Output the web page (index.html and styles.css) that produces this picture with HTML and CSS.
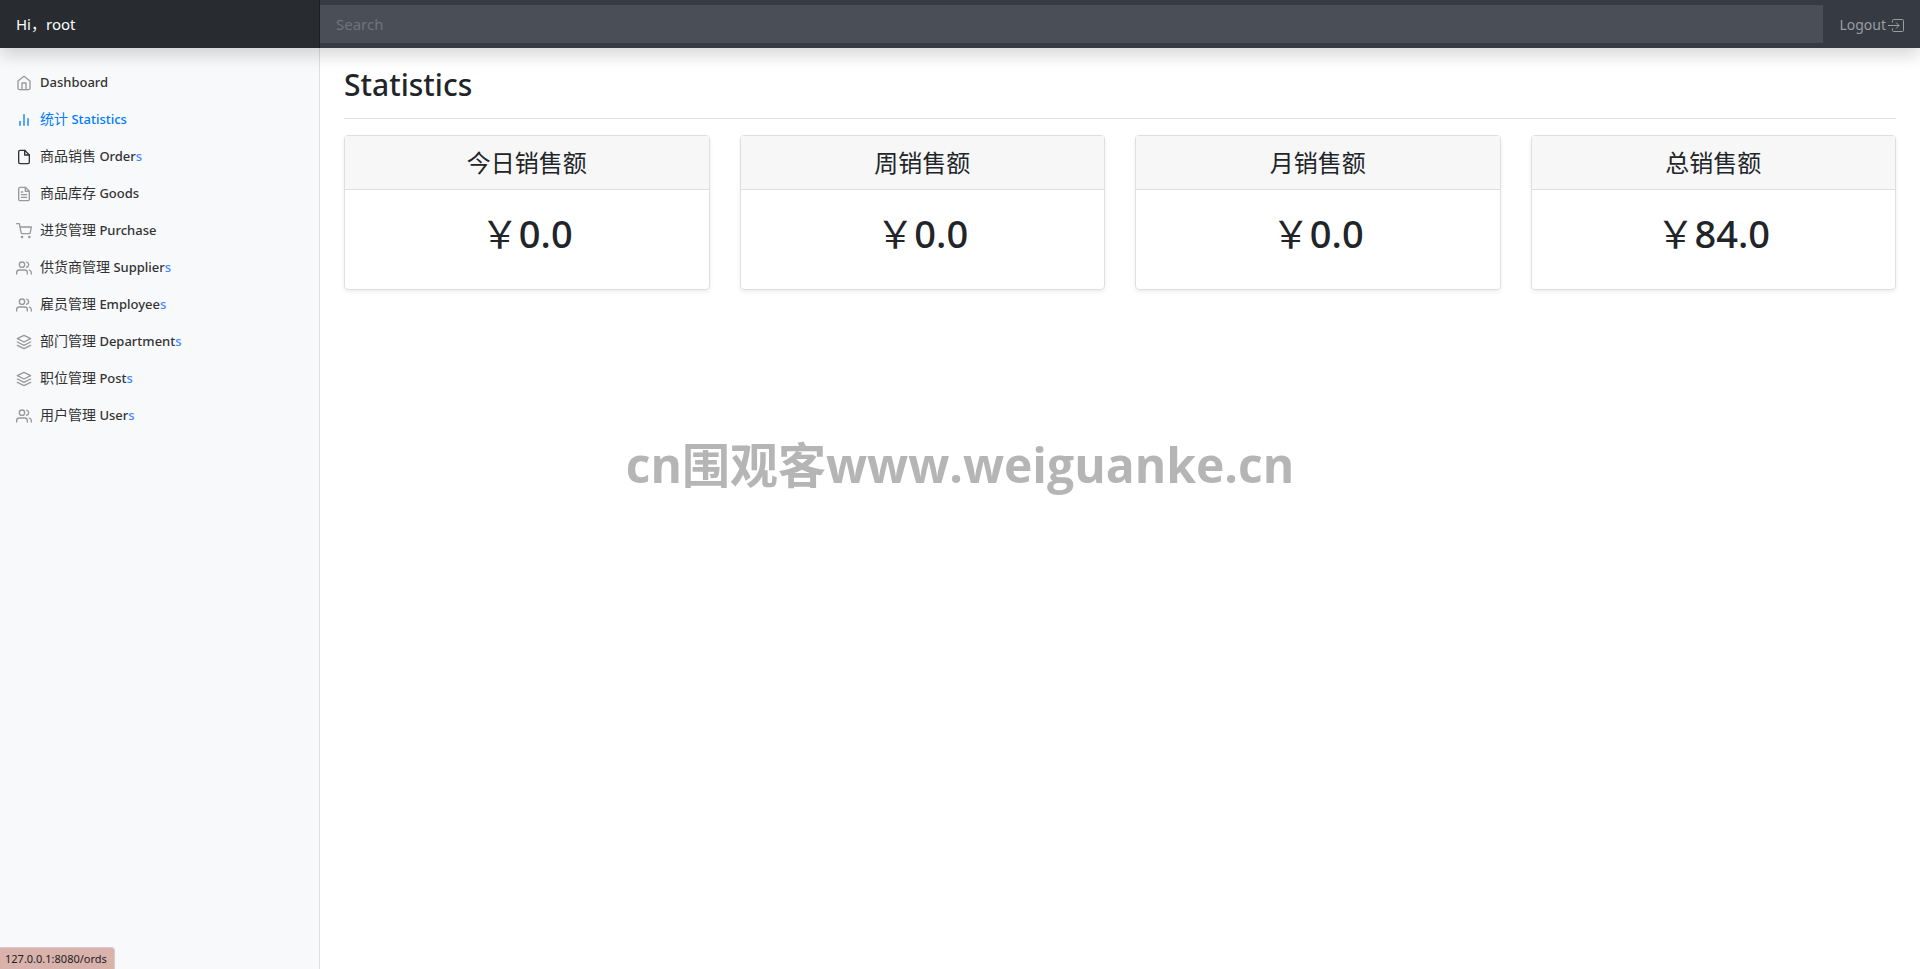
FILE: index.html
```html
<!DOCTYPE html>
<html lang="zh-CN">
<head>
    <meta charset="UTF-8">
    <meta name="viewport" content="width=device-width, initial-scale=1.0">
    <title>Statistics</title>
    <link rel="stylesheet" href="styles.css">
</head>
<body>

<!-- icons shared by several links -->
<svg class="icon-defs" aria-hidden="true">
    <symbol id="icon-users" viewBox="0 0 24 24">
        <path d="M17 21v-2a4 4 0 0 0-4-4H5a4 4 0 0 0-4 4v2"></path>
        <circle cx="9" cy="7" r="4"></circle>
        <path d="M23 21v-2a4 4 0 0 0-3-3.87"></path>
        <path d="M16 3.13a4 4 0 0 1 0 7.75"></path>
    </symbol>
    <symbol id="icon-layers" viewBox="0 0 24 24">
        <polygon points="12 2 2 7 12 12 22 7 12 2"></polygon>
        <polyline points="2 17 12 22 22 17"></polyline>
        <polyline points="2 12 12 17 22 12"></polyline>
    </symbol>
</svg>

<nav class="navbar">
    <a class="navbar-brand" href="#">Hi，root</a>
    <input class="search" type="text" placeholder="Search" aria-label="Search">
    <a class="logout" href="#">Logout
        <svg class="logout-icon" viewBox="0 0 16 16" aria-hidden="true">
            <path d="M4.500 6.500V4.500a1 1 0 0 1 1-1h9a1 1 0 0 1 1 1v10a1 1 0 0 1-1 1h-9a1 1 0 0 1-1-1V12.500"></path>
            <path d="M0 9.500h11M8 6.500l3 3-3 3"></path>
        </svg>
    </a>
</nav>

<div class="layout">
    <aside class="sidebar">
        <ul class="nav">
            <li><a class="nav-link" href="#">
                <svg class="feather" viewBox="0 0 24 24"><path d="M3 9l9-7 9 7v11a2 2 0 0 1-2 2H5a2 2 0 0 1-2-2z"></path><polyline points="9 22 9 12 15 12 15 22"></polyline></svg>
                <span>Dashboard</span>
            </a></li>
            <li><a class="nav-link active" href="#">
                <svg class="feather" viewBox="0 0 24 24"><path d="M18 20V10M12 20V4M6 20v-6"></path></svg>
                <span><span class="zh">统计</span> Statistics</span>
            </a></li>
            <li><a class="nav-link current" href="#">
                <svg class="feather" viewBox="0 0 24 24"><path d="M13 2H6a2 2 0 0 0-2 2v16a2 2 0 0 0 2 2h12a2 2 0 0 0 2-2V9z"></path><polyline points="13 2 13 9 20 9"></polyline></svg>
                <span><span class="zh">商品销售</span> Order<span class="plural">s</span></span>
            </a></li>
            <li><a class="nav-link" href="#">
                <svg class="feather" viewBox="0 0 24 24"><path d="M14 2H6a2 2 0 0 0-2 2v16a2 2 0 0 0 2 2h12a2 2 0 0 0 2-2V8z"></path><polyline points="14 2 14 8 20 8"></polyline><path d="M16 13H8M16 17H8M10 9H8"></path></svg>
                <span><span class="zh">商品库存</span> Goods</span>
            </a></li>
            <li><a class="nav-link" href="#">
                <svg class="feather" viewBox="0 0 24 24"><circle cx="9" cy="21" r="1"></circle><circle cx="20" cy="21" r="1"></circle><path d="M1 1h4l2.680 13.390a2 2 0 0 0 2 1.610h9.720a2 2 0 0 0 2-1.610L23 6H6"></path></svg>
                <span><span class="zh">进货管理</span> Purchase</span>
            </a></li>
            <li><a class="nav-link" href="#">
                <svg class="feather"><use href="#icon-users"></use></svg>
                <span><span class="zh">供货商管理</span> Supplier<span class="plural">s</span></span>
            </a></li>
            <li><a class="nav-link" href="#">
                <svg class="feather"><use href="#icon-users"></use></svg>
                <span><span class="zh">雇员管理</span> Employee<span class="plural">s</span></span>
            </a></li>
            <li><a class="nav-link" href="#">
                <svg class="feather"><use href="#icon-layers"></use></svg>
                <span><span class="zh">部门管理</span> Department<span class="plural">s</span></span>
            </a></li>
            <li><a class="nav-link" href="#">
                <svg class="feather"><use href="#icon-layers"></use></svg>
                <span><span class="zh">职位管理</span> Post<span class="plural">s</span></span>
            </a></li>
            <li><a class="nav-link" href="#">
                <svg class="feather"><use href="#icon-users"></use></svg>
                <span><span class="zh">用户管理</span> User<span class="plural">s</span></span>
            </a></li>
        </ul>
    </aside>

    <main class="main">
        <h1 class="page-title">Statistics</h1>
        <div class="card-deck">
            <div class="card">
                <h4 class="card-header">今日销售额</h4>
                <div class="card-body"><span class="yen">￥</span>0.0</div>
            </div>
            <div class="card">
                <h4 class="card-header">周销售额</h4>
                <div class="card-body"><span class="yen">￥</span>0.0</div>
            </div>
            <div class="card">
                <h4 class="card-header">月销售额</h4>
                <div class="card-body"><span class="yen">￥</span>0.0</div>
            </div>
            <div class="card">
                <h4 class="card-header">总销售额</h4>
                <div class="card-body"><span class="yen">￥</span>84.0</div>
            </div>
        </div>
    </main>
</div>

<div class="watermark">cn围观客www.weiguanke.cn</div>
<div class="status-url">127.0.0.1:8080/ords</div>

</body>
</html>
```
FILE: styles.css
```css
* {
    box-sizing: border-box;
}
body {
    margin: 0;
    min-height: 100vh;
    display: flex;
    flex-direction: column;
    font-family: "Noto Sans", "Noto Sans CJK SC", sans-serif;
    font-size: 14px;
    line-height: 21px;
    color: #212529;
    background-color: #fff;
}
a {
    text-decoration: none;
}
.icon-defs {
    display: none;
}

/* Top bar */
.navbar {
    position: relative;
    z-index: 10;
    display: flex;
    align-items: center;
    height: 48px;
    background-color: #363a43;
    box-shadow: 0 8px 16px rgba(0, 0, 0, 0.15);
}
.navbar-brand {
    width: 16.6667%;
    height: 48px;
    padding: 0 16px;
    font-size: 15px;
    line-height: 48px;
    color: #fff;
    background-color: #282c30;
    box-shadow: inset -1px 0 0 rgba(0, 0, 0, 0.25);
}
.search {
    flex: 1;
    height: 38px;
    padding: 0 16px;
    border: 0;
    border-radius: 0;
    font-family: inherit;
    font-size: 15px;
    color: #fff;
    background-color: #4a4e57;
}
.search::placeholder {
    color: #6c757d;
    opacity: 1;
}
.logout {
    display: flex;
    align-items: center;
    gap: 2px;
    padding: 0 16px;
    color: #9b9da1;
}
.logout-icon {
    width: 16px;
    height: 16px;
    fill: none;
    stroke: currentColor;
}

/* Sidebar */
.layout {
    flex: 1;
    display: flex;
}
.sidebar {
    width: 16.6667%;
    padding-top: 16px;
    background-color: #f8f9fb;
    box-shadow: inset -1px 0 0 rgba(0, 0, 0, 0.1);
}
.nav {
    margin: 0;
    padding: 0;
    list-style: none;
}
.nav-link {
    display: flex;
    align-items: center;
    gap: 8px;
    padding: 8px 16px;
    font-size: 13px;
    font-weight: 500;
    color: #333;
}
.nav-link.active {
    color: #007bff;
}
.zh {
    font-size: 14px;
    font-weight: 400;
    line-height: 14px;
}
.plural {
    color: #3d87ff;
}
.feather {
    width: 16px;
    height: 16px;
    fill: none;
    stroke: #999;
    stroke-width: 2;
    stroke-linecap: round;
    stroke-linejoin: round;
}
.active .feather,
.current .feather {
    stroke: currentColor;
}

/* Content */
.main {
    flex: 1;
    padding: 18px 24px;
}
.page-title {
    margin: 0 0 16px;
    padding-bottom: 14px;
    border-bottom: 1px solid #dee2e6;
    font-size: 30px;
    font-weight: 500;
    line-height: 38px;
}
.card-deck {
    display: grid;
    grid-template-columns: repeat(4, 1fr);
    gap: 30px;
}
.card {
    border: 1px solid #dfdfdf;
    border-radius: 4px;
    text-align: center;
    box-shadow: 0 2px 4px rgba(0, 0, 0, 0.07);
}
.card-header {
    margin: 0;
    padding: 12px 20px;
    border-bottom: 1px solid #dfdfdf;
    font-size: 24px;
    font-weight: 400;
    line-height: 29px;
    background-color: #f7f7f7;
}
.card-body {
    padding: 20px 20px 32px;
    font-size: 38px;
    font-weight: 500;
    line-height: 47px;
}
.yen {
    font-family: "Noto Sans CJK SC", sans-serif;
    font-weight: 400;
    line-height: 38px;
}

/* Overlays */
.watermark {
    position: fixed;
    top: 48%;
    left: 50%;
    transform: translate(-50%, -50%);
    font-family: "Open Sans", "Noto Sans CJK SC", sans-serif;
    font-size: 48px;
    font-weight: 700;
    line-height: 56px;
    white-space: nowrap;
    color: #b5b5b5;
    pointer-events: none;
}
.status-url {
    position: fixed;
    bottom: 0;
    left: 0;
    padding: 0 7px 0 5px;
    border: 1px solid #d5cccd;
    border-width: 1px 1px 0 0;
    border-radius: 0 4px 0 0;
    font-size: 11px;
    color: #222;
    background-color: #d9b2ac;
}
```
